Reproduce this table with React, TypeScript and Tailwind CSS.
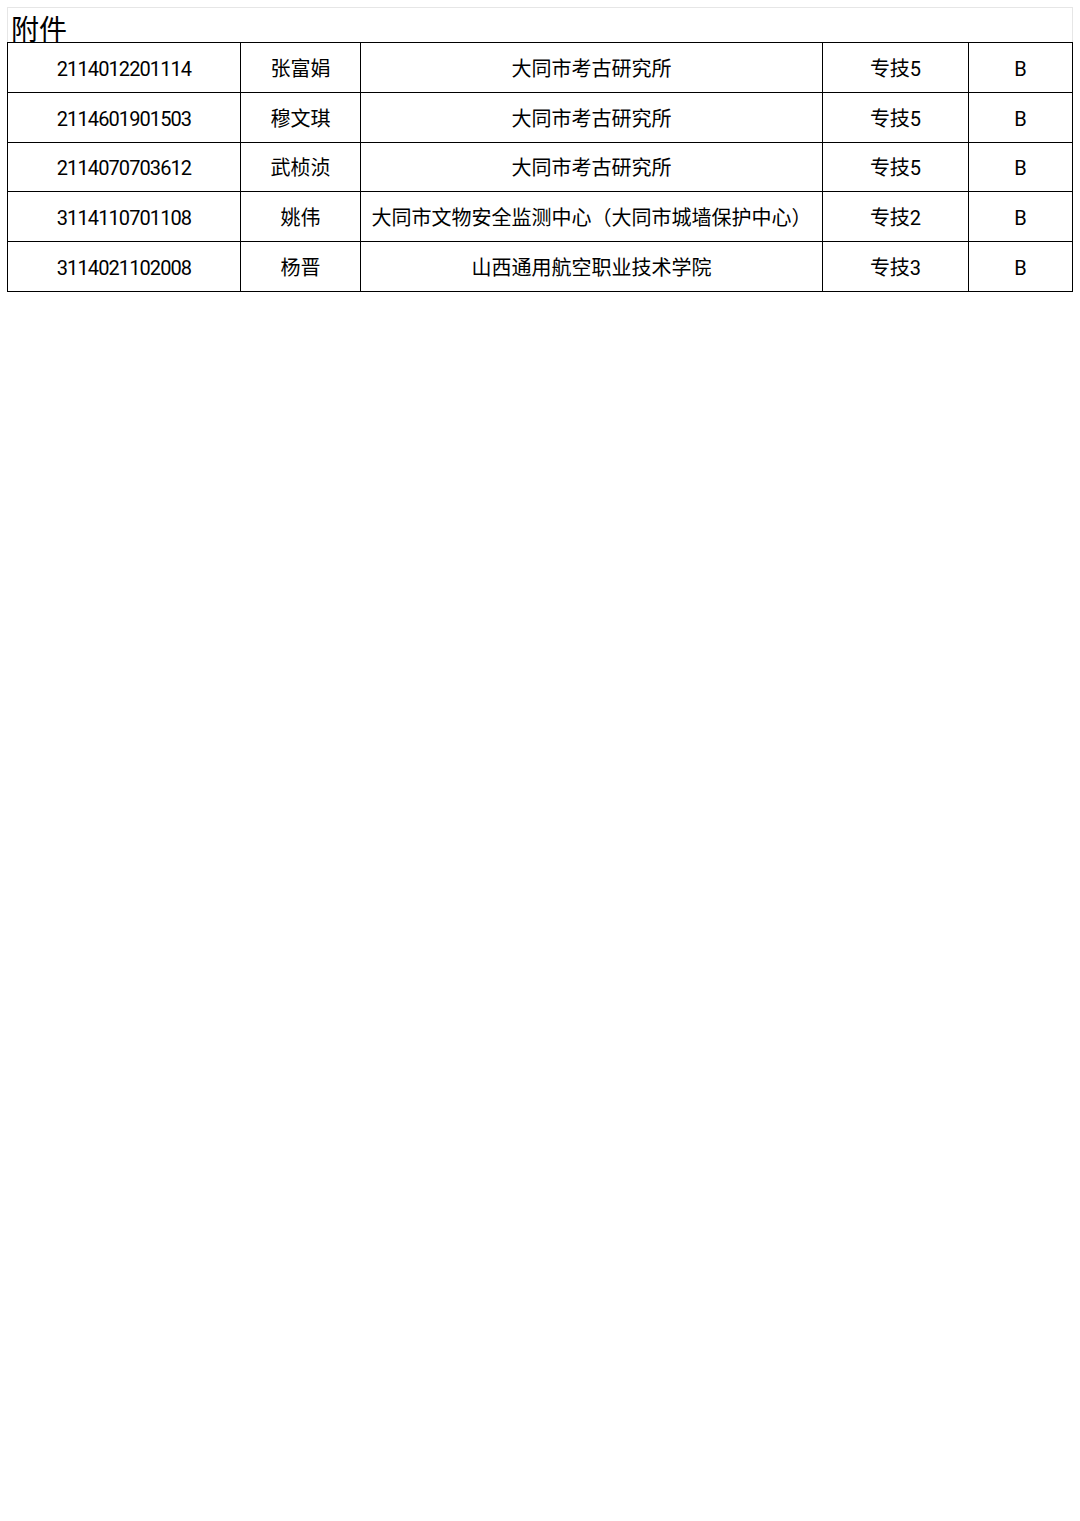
import React from "react";

const rows = [
  ["2114012201114", "张富娟", "大同市考古研究所", "专技5", "B"],
  ["2114601901503", "穆文琪", "大同市考古研究所", "专技5", "B"],
  ["2114070703612", "武桢浈", "大同市考古研究所", "专技5", "B"],
  ["3114110701108", "姚伟", "大同市文物安全监测中心（大同市城墙保护中心）", "专技2", "B"],
  ["3114021102008", "杨晋", "山西通用航空职业技术学院", "专技3", "B"],
];

const widths = ["w-[233px]", "w-[120px]", "w-[462px]", "w-[146px]", "flex-1"];

export default function App() {
  return (
    <div
      className="w-[1080px] h-[1521px] bg-white text-black"
      style={{ fontFamily: 'Roboto, "Noto Sans CJK SC", sans-serif' }}
    >
      <div className="pt-[7px] px-[7px]">
        <div className="border-t border-x border-[#e6e6e6] h-[35px] flex items-end pl-[3px]">
          <span className="text-[28px] leading-none mb-[-3px]">附件</span>
        </div>
        <div className="border-t border-l border-black">
          {rows.map((r, i) => (
            <div key={i} className="flex h-[49.8px]">
              {r.map((c, j) => (
                <div
                  key={j}
                  className={`${widths[j]} border-r border-b border-black flex items-center justify-center pt-[3px] text-[20px] ${j === 0 ? "tracking-[-0.9px]" : ""}`}
                >
                  {c}
                </div>
              ))}
            </div>
          ))}
        </div>
      </div>
    </div>
  );
}
